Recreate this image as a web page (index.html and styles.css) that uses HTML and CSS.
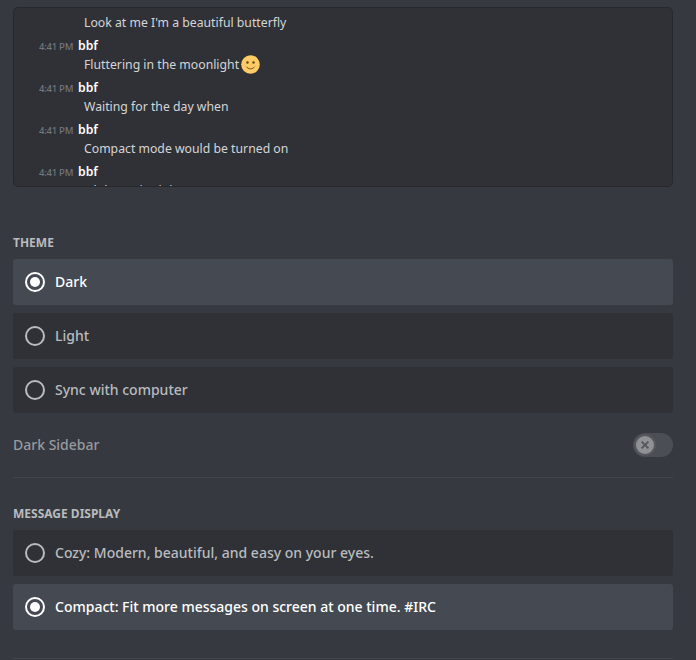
FILE: index.html
```html
<!DOCTYPE html>
<html lang="en">
<head>
<meta charset="utf-8">
<title>Appearance</title>
<link rel="stylesheet" href="styles.css">
</head>
<body>
<main class="page">
  <section class="preview">
    <div class="scroller">
      <p class="text">Look at me I'm a beautiful butterfly</p>
      <div class="group">
        <div class="head"><span class="time">4:41 PM</span><span class="name">bbf</span></div>
        <p class="text">Fluttering in the moonlight
          <svg class="emoji" viewBox="0 0 20 20" aria-hidden="true"><circle cx="10" cy="10" r="9.8" fill="#ffcc66"/><circle cx="6.8" cy="8" r="1.3" fill="#66471b"/><circle cx="13.2" cy="8" r="1.3" fill="#66471b"/><path d="M5.8 12.6c1.1 1.3 2.5 1.9 4.2 1.9s3.1-.6 4.2-1.9" fill="none" stroke="#66471b" stroke-width="1" stroke-linecap="round"/></svg>
        </p>
      </div>
      <div class="group">
        <div class="head"><span class="time">4:41 PM</span><span class="name">bbf</span></div>
        <p class="text">Waiting for the day when</p>
      </div>
      <div class="group">
        <div class="head"><span class="time">4:41 PM</span><span class="name">bbf</span></div>
        <p class="text">Compact mode would be turned on</p>
      </div>
      <div class="group">
        <div class="head"><span class="time">4:41 PM</span><span class="name">bbf</span></div>
        <p class="text">Oh how nice it is</p>
      </div>
    </div>
  </section>

  <h2 class="label theme-label">Theme</h2>
  <div class="options">
    <div class="option selected"><span class="radio"></span><span class="option-text">Dark</span></div>
    <div class="option"><span class="radio"></span><span class="option-text">Light</span></div>
    <div class="option"><span class="radio"></span><span class="option-text">Sync with computer</span></div>
  </div>

  <div class="setting">
    <span class="setting-name">Dark Sidebar</span>
    <span class="toggle">
      <span class="knob">
        <svg viewBox="0 0 12 12" aria-hidden="true"><path d="M2.6 2.6l6.8 6.8M9.4 2.6L2.6 9.4" fill="none" stroke="#55585e" stroke-width="2"/></svg>
      </span>
    </span>
  </div>
  <div class="divider"></div>

  <h2 class="label display-label">Message Display</h2>
  <div class="options">
    <div class="option"><span class="radio"></span><span class="option-text">Cozy: Modern, beautiful, and easy on your eyes.</span></div>
    <div class="option selected"><span class="radio"></span><span class="option-text">Compact: Fit more messages on screen at one time. #IRC</span></div>
  </div>
  <div class="divider tail"></div>
</main>
</body>
</html>
```

FILE: styles.css
```css
* { box-sizing: border-box; }
html, body { margin: 0; height: 100%; }
body {
  background: #36393f;
  font-family: "Noto Sans", "Open Sans", sans-serif;
  overflow: hidden;
}
.page { padding: 7px 23px 0 13px; }

.preview {
  height: 180px;
  background: #303136;
  border: 1px solid #27282c;
  border-radius: 5px;
  overflow: hidden;
}
.scroller { padding: 5px 0 0 25px; }
.text {
  margin: 0;
  padding-left: 45px;
  font-size: 12.25px;
  line-height: 19px;
  height: 19px;
  color: #d4d5d7;
  white-space: nowrap;
}
.group { margin-top: 4px; }
.head { display: flex; align-items: baseline; height: 19px; line-height: 19px; }
.time {
  width: 39px;
  font-size: 9.5px;
  font-weight: 500;
  color: #72767d;
  letter-spacing: -.25px;
  white-space: nowrap;
}
.name { font-size: 12.25px; font-weight: 600; color: #fff; }
.emoji { width: 19px; height: 19px; margin-left: -1px; vertical-align: -5px; }

.label {
  margin: 0;
  font-size: 12px;
  line-height: 16px;
  font-weight: 700;
  text-transform: uppercase;
  color: #b9bbbe;
}
.theme-label { margin-top: 48px; margin-bottom: 8px; }
.display-label { margin-top: 28px; margin-bottom: 8px; }

.options { display: flex; flex-direction: column; gap: 8px; }
.option {
  display: flex;
  align-items: center;
  gap: 10px;
  height: 46px;
  padding: 0 12px;
  border-radius: 3px;
  background: #2f3136;
  color: #b9bbbe;
  font-size: 14px;
  font-weight: 500;
}
.option-text { margin-bottom: 2px; }
.option.selected { background: #454a52; color: #fff; }
.radio {
  flex: none;
  width: 20px;
  height: 20px;
  border: 2px solid #b9bbbe;
  border-radius: 50%;
  display: flex;
  align-items: center;
  justify-content: center;
}
.selected .radio { border-color: #fff; }
.selected .radio::after {
  content: "";
  width: 10px;
  height: 10px;
  border-radius: 50%;
  background: #fff;
}

.setting {
  display: flex;
  align-items: center;
  justify-content: space-between;
  margin-top: 20px;
  height: 24px;
}
.setting-name { font-size: 14px; font-weight: 500; color: #96999e; margin-bottom: 2px; }
.toggle {
  width: 40px;
  height: 24px;
  border-radius: 12px;
  background: #4b4e54;
  position: relative;
}
.knob {
  position: absolute;
  left: 3px;
  top: 3px;
  width: 18px;
  height: 18px;
  border-radius: 50%;
  background: #8f9195;
  box-shadow: 0 0 0 2px #54575d;
  display: flex;
  align-items: center;
  justify-content: center;
}
.knob svg { width: 12px; height: 12px; }

.divider { height: 1px; background: #42454b; margin-top: 20px; }
.divider.tail { margin-top: 28px; }
```
